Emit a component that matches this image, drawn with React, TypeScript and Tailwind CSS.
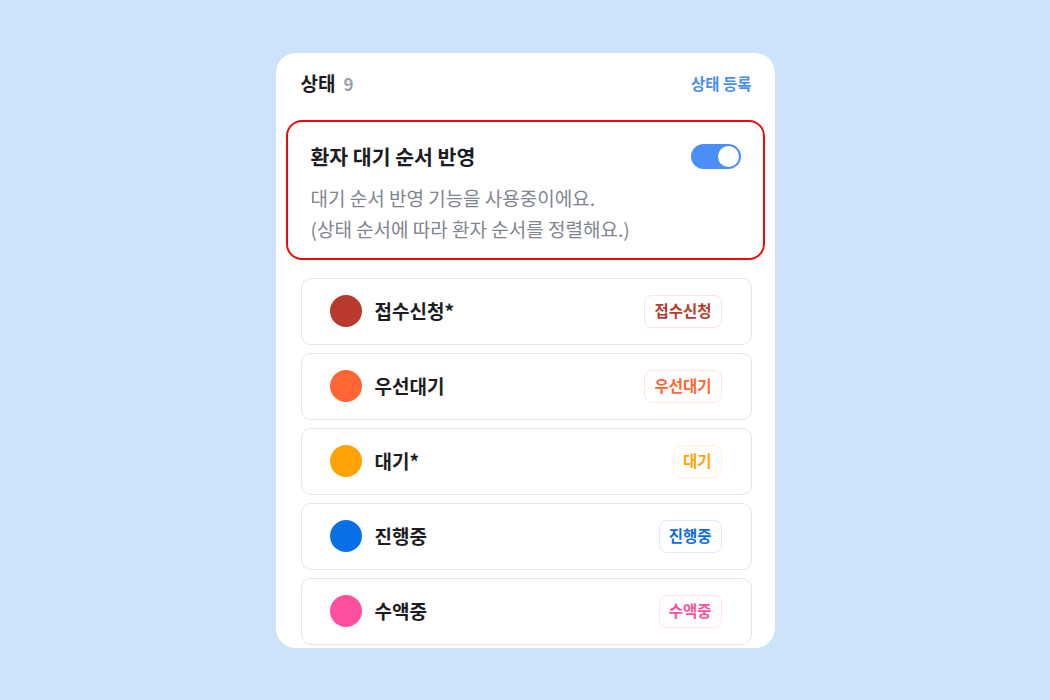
import { useState } from "react";

type Status = {
  name: string;
  required?: boolean;
  color: string;
  tint: string;
};

const statuses: Status[] = [
  { name: "접수신청", required: true, color: "#b83a2e", tint: "#fbe3e1" },
  { name: "우선대기", color: "#ff6633", tint: "#ffe6dc" },
  { name: "대기", required: true, color: "#ffa305", tint: "#fff0d6" },
  { name: "진행중", color: "#0a6fe6", tint: "#dceafc" },
  { name: "수액중", color: "#ff4f9f", tint: "#ffe0ef" },
];

export default function App() {
  const [on, setOn] = useState(true);

  return (
    <div
      className="h-screen w-full bg-[#cde3f9] flex items-center justify-center"
      style={{ fontFamily: '"Noto Sans CJK KR", "Noto Sans", sans-serif' }}
    >
      <div className="w-[499px] h-[595px] bg-white rounded-[20px] overflow-hidden pl-[25px] pr-[23px] pt-[19px]">
        <div className="flex items-center justify-between h-[24px]">
          <div className="flex items-center gap-[8px]">
            <span className="text-[19px] font-bold text-[#1b1d22]">상태</span>
            <span className="text-[17px] font-bold text-[#9aa0ad]">9</span>
          </div>
          <button className="text-[15.5px] font-bold text-[#4a8cf0]">상태 등록</button>
        </div>

        <div className="mt-[24px] -ml-[15px] -mr-[13px] border-2 border-[#ee0a0a] rounded-[16px] pl-[23px] pr-[22px] pt-[22px] pb-[14px]">
          <div className="flex items-center justify-between h-[26px]">
            <span className="text-[20.5px] font-bold text-[#1b1d22]">환자 대기 순서 반영</span>
            <button
              onClick={() => setOn(!on)}
              className={
                "w-[50px] h-[25px] rounded-full flex items-center px-[2px] " +
                (on ? "bg-[#4b8ef5] justify-end" : "bg-[#d5d8de] justify-start")
              }
            >
              <span className="w-[21px] h-[21px] rounded-full bg-white block" />
            </button>
          </div>
          <div className="mt-[12px] text-[19px] leading-[31px] text-[#80858f]">
            <p>대기 순서 반영 기능을 사용중이에요.</p>
            <p>(상태 순서에 따라 환자 순서를 정렬해요.)</p>
          </div>
        </div>

        <div className="mt-[18px] flex flex-col gap-[8px]">
          {statuses.map((s) => (
            <div
              key={s.name}
              className="h-[67px] shrink-0 border-[1.5px] border-[#e4e6ee] rounded-[10px] flex items-center justify-between pl-[28px] pr-[29px]"
            >
              <div className="flex items-center gap-[13px]">
                <span
                  className="w-[32px] h-[32px] rounded-full block"
                  style={{ backgroundColor: s.color }}
                />
                <span className="text-[19px] font-bold text-[#1b1d22]">
                  {s.name}
                  {s.required ? "*" : ""}
                </span>
              </div>
              <span
                className="h-[33px] px-[9px] rounded-[8px] border flex items-center text-[15.5px] font-bold"
                style={{ color: s.color, borderColor: s.tint }}
              >
                {s.name}
              </span>
            </div>
          ))}
        </div>
      </div>
    </div>
  );
}
